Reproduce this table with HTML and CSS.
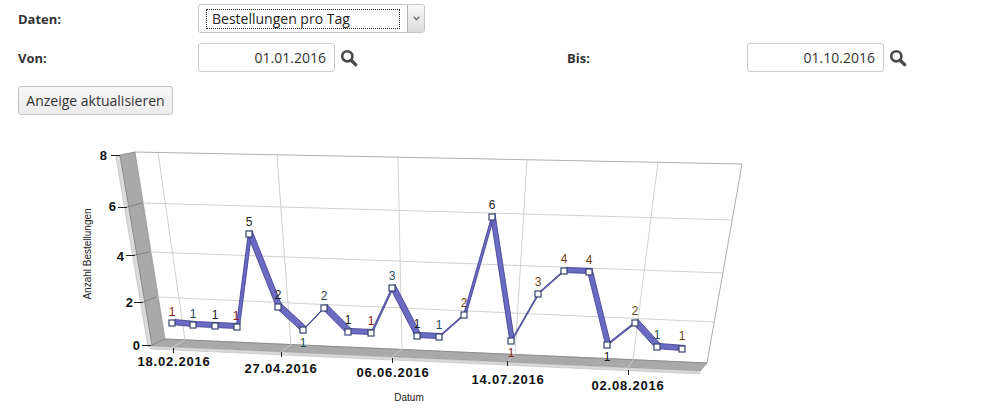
FILE: index.html
```html
<!DOCTYPE html>
<html lang="de">
<head>
<meta charset="utf-8">
<title>Statistik</title>
<link rel="stylesheet" href="styles.css">
</head>
<body>
<div class="form">
  <div class="row">
    <span class="lbl">Daten:</span>
    <div class="select">
      <span class="select-value"><span class="focus">Bestellungen pro Tag</span></span>
      <span class="select-btn"><svg width="7" height="5" viewBox="0 0 7 5"><polyline points="0.8,0.8 3.5,3.8 6.2,0.8" fill="none" stroke="#6e6e6e" stroke-width="1.3"/></svg></span>
    </div>
  </div>
  <div class="row row-dates">
    <span class="lbl">Von:</span>
    <div class="ctrl">
      <div class="input">01.01.2016</div>
      <svg class="search" width="18" height="18" viewBox="0 0 18 18"><circle cx="7.3" cy="7.3" r="5.1" fill="none" stroke="#4a4a4a" stroke-width="2.6"/><line x1="11.2" y1="11.2" x2="15.6" y2="15.6" stroke="#4a4a4a" stroke-width="3.4" stroke-linecap="round"/></svg>
    </div>
    <span class="lbl">Bis:</span>
    <div class="ctrl">
      <div class="input">01.10.2016</div>
      <svg class="search" width="18" height="18" viewBox="0 0 18 18"><circle cx="7.3" cy="7.3" r="5.1" fill="none" stroke="#4a4a4a" stroke-width="2.6"/><line x1="11.2" y1="11.2" x2="15.6" y2="15.6" stroke="#4a4a4a" stroke-width="3.4" stroke-linecap="round"/></svg>
    </div>
  </div>
  <button class="btn" type="button">Anzeige aktualisieren</button>
</div>

<div class="chart">
<svg class="chart-svg" width="989" height="300" viewBox="0 120 989 300">
  <!-- left wall -->
  <polygon class="wall-side" points="116,157 120,155 152,345 148,347"/>
  <polygon class="wall" points="120,155 135,152 165,339 152,345"/>
  <!-- back wall -->
  <polygon class="backwall" points="135,152 742,164 707,363 165,339"/>
  <!-- floor -->
  <polygon class="floor" points="150,346 165,339 707,363 700,371"/>
  <polygon class="floor-front" points="150,346 700,371 700,374 150,349"/>

  <!-- horizontal grid -->
  <line class="grid" x1="142.5" y1="203" x2="732.2" y2="220"/>
  <line class="grid" x1="149.9" y1="252" x2="722.8" y2="273"/>
  <line class="grid" x1="156.7" y1="297" x2="714.2" y2="322"/>
  <line class="wallgrid" x1="127" y1="207" x2="142.5" y2="203"/>
  <line class="wallgrid" x1="135" y1="255" x2="149.9" y2="252"/>
  <line class="wallgrid" x1="143" y1="302" x2="156.7" y2="297"/>

  <!-- vertical grid -->
  <polyline class="grid" points="158,152.5 185,340 173,347"/>
  <polyline class="grid" points="277,154.8 291,344.7 281,351.9"/>
  <polyline class="grid" points="398,157.2 402,349.6 392,356.5"/>
  <polyline class="grid" points="527,159.7 515,354.6 507,361.6"/>
  <polyline class="grid" points="658,162.3 633,359.8 628,367.8"/>

  <!-- axis ticks -->
  <line class="tick" x1="111" y1="155.5" x2="120" y2="155.5"/>
  <line class="tick" x1="118" y1="207.5" x2="127" y2="207.5"/>
  <line class="tick" x1="126" y1="255.5" x2="135" y2="255.5"/>
  <line class="tick" x1="134" y1="302.5" x2="143" y2="302.5"/>
  <line class="tick" x1="142" y1="345.5" x2="151" y2="345.5"/>
  <line class="tick" x1="173.5" y1="348" x2="173.5" y2="353"/>
  <line class="tick" x1="281.5" y1="352" x2="281.5" y2="357"/>
  <line class="tick" x1="392.5" y1="358" x2="392.5" y2="363"/>
  <line class="tick" x1="507.5" y1="361" x2="507.5" y2="366"/>
  <line class="tick" x1="628.5" y1="370" x2="628.5" y2="375"/>

  <!-- axis labels -->
  <text class="axis-y" x="107" y="160">8</text>
  <text class="axis-y" x="116" y="211">6</text>
  <text class="axis-y" x="124" y="261">4</text>
  <text class="axis-y" x="133" y="307">2</text>
  <text class="axis-y" x="140" y="350">0</text>

  <text class="axis-x" x="174" y="366">18.02.2016</text>
  <text class="axis-x" x="281" y="373">27.04.2016</text>
  <text class="axis-x" x="393" y="377">06.06.2016</text>
  <text class="axis-x" x="508" y="384">14.07.2016</text>
  <text class="axis-x" x="628" y="390">02.08.2016</text>

  <text class="title-y" transform="translate(91,254) rotate(-90)">Anzahl Bestellungen</text>
  <text class="title-x" x="409" y="401">Datum</text>

  <!-- series ribbon -->
  <g class="ribbon">
    <polygon points="171,324.5 192,326.5 196,321.5 175,319.5"/>
    <polygon points="192,326.5 214,327.5 218,322.5 196,321.5"/>
    <polygon points="214,327.5 236,328.5 240,323.5 218,322.5"/>
    <polygon points="236,328.5 248,235.5 252,230.5 240,323.5"/>
    <polygon points="248,235.5 277,308.5 281,303.5 252,230.5"/>
    <polygon points="277,308.5 302,331.5 306,326.5 281,303.5"/>
    <polygon points="302,331.5 323,309.5 327,304.5 306,326.5"/>
    <polygon points="323,309.5 347,333.5 351,328.5 327,304.5"/>
    <polygon points="347,333.5 370,334.5 374,329.5 351,328.5"/>
    <polygon points="370,334.5 391,289.5 395,284.5 374,329.5"/>
    <polygon points="391,289.5 416,337.5 420,332.5 395,284.5"/>
    <polygon points="416,337.5 438,338.5 442,333.5 420,332.5"/>
    <polygon points="438,338.5 463,316.5 467,311.5 442,333.5"/>
    <polygon points="463,316.5 491,218.5 495,213.5 467,311.5"/>
    <polygon points="491,218.5 510,342.5 514,337.5 495,213.5"/>
    <polygon points="510,342.5 537,295.5 541,290.5 514,337.5"/>
    <polygon points="537,295.5 563,272.5 567,267.5 541,290.5"/>
    <polygon points="563,272.5 588,273.5 592,268.5 567,267.5"/>
    <polygon points="588,273.5 606,346.5 610,341.5 592,268.5"/>
    <polygon points="606,346.5 634,324.5 638,319.5 610,341.5"/>
    <polygon points="634,324.5 656,348.5 660,343.5 638,319.5"/>
    <polygon points="656,348.5 681,350.5 685,345.5 660,343.5"/>
  </g>

  <!-- markers -->
  <g class="markers">
    <rect x="169" y="320" width="6" height="6"/>
    <rect x="190" y="322" width="6" height="6"/>
    <rect x="212" y="323" width="6" height="6"/>
    <rect x="234" y="324" width="6" height="6"/>
    <rect x="246" y="231" width="6" height="6"/>
    <rect x="275" y="304" width="6" height="6"/>
    <rect x="300" y="327" width="6" height="6"/>
    <rect x="321" y="305" width="6" height="6"/>
    <rect x="345" y="329" width="6" height="6"/>
    <rect x="368" y="330" width="6" height="6"/>
    <rect x="389" y="285" width="6" height="6"/>
    <rect x="414" y="333" width="6" height="6"/>
    <rect x="436" y="334" width="6" height="6"/>
    <rect x="461" y="312" width="6" height="6"/>
    <rect x="489" y="214" width="6" height="6"/>
    <rect x="508" y="338" width="6" height="6"/>
    <rect x="535" y="291" width="6" height="6"/>
    <rect x="561" y="268" width="6" height="6"/>
    <rect x="586" y="269" width="6" height="6"/>
    <rect x="604" y="342" width="6" height="6"/>
    <rect x="632" y="320" width="6" height="6"/>
    <rect x="654" y="344" width="6" height="6"/>
    <rect x="679" y="346" width="6" height="6"/>
  </g>

  <!-- data labels -->
  <g class="dl">
    <text class="c-red" x="172" y="316">1</text>
    <text class="c-teal" x="193" y="318">1</text>
    <text class="c-dark" x="215" y="319">1</text>
    <text class="c-red" x="236" y="320">1</text>
    <text class="c-dark" x="249" y="226">5</text>
    <text class="c-dark" x="278" y="299">2</text>
    <text class="c-teal" x="303" y="347">1</text>
    <text class="c-slate" x="324" y="300">2</text>
    <text class="c-dark" x="348" y="324">1</text>
    <text class="c-red" x="371" y="325">1</text>
    <text class="c-teal" x="392" y="280">3</text>
    <text class="c-dark" x="417" y="328">1</text>
    <text class="c-teal" x="439" y="329">1</text>
    <text class="c-brown" x="464" y="307">2</text>
    <text class="c-dark" x="492" y="209">6</text>
    <text class="c-red" x="511" y="357">1</text>
    <text class="c-brown" x="538" y="286">3</text>
    <text class="c-brown" x="564" y="263">4</text>
    <text class="c-brown" x="589" y="264">4</text>
    <text class="c-dark" x="607" y="361">1</text>
    <text class="c-brown" x="635" y="315">2</text>
    <text class="c-teal" x="657" y="339">1</text>
    <text class="c-brown" x="682" y="340">1</text>
  </g>
</svg>
</div>
</body>
</html>
```

FILE: styles.css
```css
html, body {
  margin: 0;
  padding: 0;
  background: #ffffff;
}

body {
  font-family: "Open Sans", "Liberation Sans", sans-serif;
  font-size: 13px;
  color: #333333;
}

.form {
  padding: 4px 0 0 18px;
}

.row {
  display: grid;
  grid-template-columns: 180px 369px 180px auto;
  align-items: center;
  height: 29px;
}

.row-dates {
  margin-top: 10px;
}

.lbl {
  font-weight: 700;
  font-size: 13px;
  color: #333333;
}

.select {
  display: flex;
  width: 227px;
  height: 29px;
  box-sizing: border-box;
  border: 1px solid #c6c6c6;
  border-radius: 3px;
  background: #ffffff;
}

.select-value {
  flex: 1;
  display: flex;
  padding: 4px 7px 3px 7px;
}

.focus {
  flex: 1;
  border: 1px dotted #222222;
  padding-left: 5px;
  line-height: 18px;
  font-size: 14px;
  color: #222222;
}

.select-btn {
  width: 16px;
  display: flex;
  align-items: center;
  justify-content: center;
  border-left: 1px solid #b4b4b4;
  border-radius: 0 2px 2px 0;
  background: linear-gradient(#f7f7f7, #dcdcdc);
}

.ctrl {
  display: flex;
  align-items: center;
}

.input {
  width: 137px;
  height: 29px;
  box-sizing: border-box;
  border: 1px solid #cccccc;
  border-radius: 3px;
  padding-right: 8px;
  text-align: right;
  line-height: 27px;
  font-size: 14px;
  color: #333333;
}

.search {
  margin-left: 5px;
  display: block;
}

.btn {
  display: block;
  margin-top: 14px;
  width: 155px;
  height: 29px;
  padding: 0;
  border: 1px solid #c4c4c4;
  border-radius: 3px;
  background: linear-gradient(#f7f7f7, #ececec);
  font-family: "Open Sans", "Liberation Sans", sans-serif;
  font-size: 14px;
  color: #333333;
}

.chart {
  margin-top: 5px;
}

.chart-svg {
  display: block;
}

.wall-side {
  fill: #dcdcdc;
  stroke: #b4b4b4;
  stroke-width: 0.6;
}

.wall {
  fill: #a9a9a9;
  stroke: #808080;
  stroke-width: 0.8;
}

.backwall {
  fill: #ffffff;
  stroke: #a4a4a4;
  stroke-width: 0.9;
}

.floor {
  fill: #a9a9a9;
  stroke: #858585;
  stroke-width: 0.8;
}

.floor-front {
  fill: #d8d8d8;
  stroke: #b8b8b8;
  stroke-width: 0.5;
}

.grid {
  fill: none;
  stroke: #cbcbcb;
  stroke-width: 0.9;
}

.wallgrid {
  stroke: #7c7c7c;
  stroke-width: 0.9;
}

.tick {
  stroke: #222222;
  stroke-width: 1;
}

.axis-y {
  font-family: "Liberation Sans", Arial, sans-serif;
  font-weight: 700;
  font-size: 13px;
  fill: #111111;
  text-anchor: end;
}

.axis-x {
  font-family: "Liberation Sans", Arial, sans-serif;
  font-weight: 700;
  font-size: 13px;
  letter-spacing: 0.8px;
  fill: #111111;
  text-anchor: middle;
}

.title-y,
.title-x {
  font-family: "Liberation Sans", Arial, sans-serif;
  font-size: 10px;
  fill: #222222;
  text-anchor: middle;
}

.ribbon polygon {
  fill: #6b6bc4;
  stroke: #3b3b8c;
  stroke-width: 0.8;
  stroke-linejoin: round;
}

.markers rect {
  fill: #ffffff;
  stroke: #34466e;
  stroke-width: 1.2;
}

.dl text {
  font-family: "Liberation Sans", Arial, sans-serif;
  font-size: 12px;
  text-anchor: middle;
}

.c-red { fill: #8b1a1a; }
.c-teal { fill: #1d4e5a; }
.c-dark { fill: #1a1a1a; }
.c-slate { fill: #2f3f4f; }
.c-brown { fill: #6b4410; }
```
